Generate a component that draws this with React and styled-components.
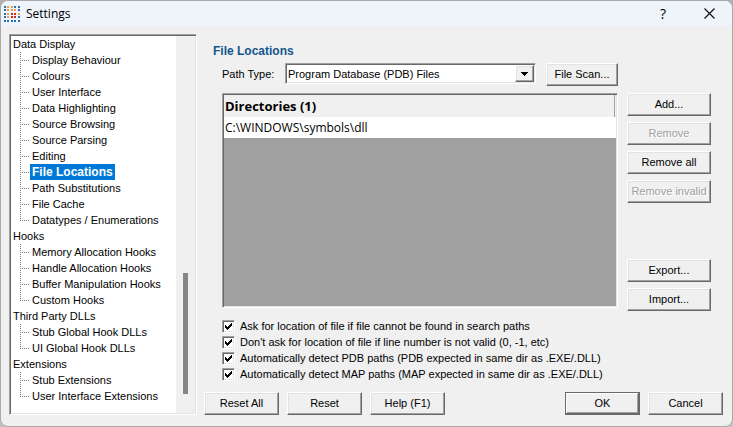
import { useState } from "react";
import styled, { createGlobalStyle, css } from "styled-components";

const TREE = [
  {
    label: "Data Display",
    items: [
      "Display Behaviour",
      "Colours",
      "User Interface",
      "Data Highlighting",
      "Source Browsing",
      "Source Parsing",
      "Editing",
      "File Locations",
      "Path Substitutions",
      "File Cache",
      "Datatypes / Enumerations",
    ],
  },
  {
    label: "Hooks",
    items: [
      "Memory Allocation Hooks",
      "Handle Allocation Hooks",
      "Buffer Manipulation Hooks",
      "Custom Hooks",
    ],
  },
  { label: "Third Party DLLs", items: ["Stub Global Hook DLLs", "UI Global Hook DLLs"] },
  { label: "Extensions", items: ["Stub Extensions", "User Interface Extensions"] },
];

const OPTIONS = [
  "Ask for location of file if file cannot be found in search paths",
  "Don't ask for location of file if line number is not valid (0, -1, etc)",
  "Automatically detect PDB paths (PDB expected in same dir as .EXE/.DLL)",
  "Automatically detect MAP paths (MAP expected in same dir as .EXE/.DLL)",
];

// b = blue, o = orange, r = red
const LOGO_ROWS = ["boobb", "booob", "borro", "borrb", "bbbbb"];
const LOGO_COLORS = { b: "#2a72b8", o: "#f0a040", r: "#cc2a22" };
const LOGO_STEPS = [0, 3, 7, 10, 14];

// top edge of the tick in each column, every column is 3px tall
const TICK = [5, 6, 7, 6, 5, 4, 3];

function Logo() {
  return (
    <svg width="16" height="16" viewBox="0 0 16 16" shapeRendering="crispEdges" aria-hidden="true">
      {LOGO_ROWS.map((row, y) =>
        row.split("").map((c, x) => (
          <rect
            key={`${x}-${y}`}
            x={LOGO_STEPS[x]}
            y={LOGO_STEPS[y]}
            width="2"
            height="2"
            fill={LOGO_COLORS[c]}
          />
        ))
      )}
    </svg>
  );
}

function Check({ label }) {
  const [checked, setChecked] = useState(true);

  return (
    <CheckLabel>
      <CheckBox>
        <input type="checkbox" checked={checked} onChange={(e) => setChecked(e.target.checked)} />
        {checked && (
          <svg width="13" height="13" viewBox="0 0 13 13" shapeRendering="crispEdges" aria-hidden="true">
            <path d={TICK.map((y, i) => `M${i + 3} ${y}h1v3h-1z`).join("")} />
          </svg>
        )}
      </CheckBox>
      {label}
    </CheckLabel>
  );
}

function App() {
  const [page, setPage] = useState("File Locations");

  return (
    <>
      <GlobalStyle />
      <Desktop>
        <Dialog>
          <TitleBar>
            <Logo />
            <h1>Settings</h1>
            <CaptionButton aria-label="Help">?</CaptionButton>
            <CaptionButton aria-label="Close">
              <svg width="11" height="11" viewBox="0 0 11 11" aria-hidden="true">
                <path d="M.5.5l10 10M10.5.5l-10 10" stroke="#111" strokeWidth="1.2" />
              </svg>
            </CaptionButton>
          </TitleBar>
          <Body>
            <TreePanel>
              <Tree>
                {TREE.map((group) => (
                  <li key={group.label}>
                    <TreeGroup>{group.label}</TreeGroup>
                    <TreeItems>
                      {group.items.map((item) => (
                        <TreeItem key={item}>
                          <TreeButton $selected={item === page} onClick={() => setPage(item)}>
                            {item}
                          </TreeButton>
                        </TreeItem>
                      ))}
                    </TreeItems>
                  </li>
                ))}
              </Tree>
              <ScrollTrack>
                <ScrollThumb />
              </ScrollTrack>
            </TreePanel>
            <Main>
              <Content>
                <Heading>File Locations</Heading>
                <PathRow>
                  <label htmlFor="pathType">Path Type:</label>
                  <Combo>
                    <select id="pathType">
                      <option>Program Database (PDB) Files</option>
                    </select>
                    <ComboArrow>
                      <svg width="7" height="4" viewBox="0 0 7 4" shapeRendering="crispEdges" aria-hidden="true">
                        <path d="M0 0h7L3.5 4z" />
                      </svg>
                    </ComboArrow>
                  </Combo>
                  <Button $width={72}>File Scan...</Button>
                </PathRow>
                <ListRow>
                  <ListBox>
                    <Directories>
                      <thead>
                        <tr>
                          <th>Directories (1)</th>
                        </tr>
                      </thead>
                      <tbody>
                        <tr>
                          <td>C:\WINDOWS\symbols\dll</td>
                        </tr>
                      </tbody>
                    </Directories>
                  </ListBox>
                  <ListActions>
                    <Button $width={84}>Add...</Button>
                    <Button $width={84} disabled>Remove</Button>
                    <Button $width={84}>Remove all</Button>
                    <Button $width={84} disabled>Remove invalid</Button>
                    <Spacer />
                    <Button $width={84}>Export...</Button>
                    <Button $width={84}>Import...</Button>
                  </ListActions>
                </ListRow>
                <Options>
                  {OPTIONS.map((label) => (
                    <Check key={label} label={label} />
                  ))}
                </Options>
              </Content>
              <Footer>
                <Button $width={75}>Reset All</Button>
                <Button $width={75}>Reset</Button>
                <Button $width={75}>Help (F1)</Button>
                <Spacer />
                <Button $width={75} $primary>OK</Button>
                <Button $width={75}>Cancel</Button>
              </Footer>
            </Main>
          </Body>
        </Dialog>
      </Desktop>
    </>
  );
}

export default App;

const GlobalStyle = createGlobalStyle`
  * {
    box-sizing: border-box;
  }
  body {
    margin: 0;
    font: 11px/16px "Liberation Sans", Arial, sans-serif;
    color: #000;
  }
  button, select, input {
    font: inherit;
    color: inherit;
    margin: 0;
  }
  svg {
    display: block;
  }
`;

const sunken = css`
  border: 1px solid;
  border-color: #a0a0a0 #fff #fff #a0a0a0;
  box-shadow: inset 1px 1px #696969, inset -1px -1px #e3e3e3;
`;

const raised = css`
  border: 1px solid;
  border-color: #fff #696969 #696969 #fff;
  box-shadow: inset -1px -1px #a0a0a0, inset 1px 1px #e3e3e3;
`;

const Desktop = styled.div`
  display: flex;
  min-height: 100vh;
  background: linear-gradient(#b4b0b2 31px, #c0b840 31px, #c0b840 46px, #c4c2c3 46px);
`;

const Dialog = styled.div`
  flex: 1;
  display: flex;
  flex-direction: column;
  background: #f0f0f0;
  border: 1px solid #aaa;
  border-radius: 8px;
  overflow: hidden;
`;

const TitleBar = styled.header`
  display: flex;
  align-items: center;
  height: 25px;
  padding-left: 3px;
  background: #eff4fa;

  h1 {
    flex: 1;
    margin: 0 0 0 6px;
    font: 12px/16px "Open Sans", "Noto Sans", sans-serif;
  }
`;

const CaptionButton = styled.button`
  display: flex;
  align-items: center;
  justify-content: center;
  width: 46px;
  height: 25px;
  padding: 0;
  border: 0;
  background: none;
  font: 14px/16px "Open Sans", "Noto Sans", sans-serif;
`;

const Body = styled.div`
  flex: 1;
  display: flex;
  gap: 7px;
  padding: 8px 9px 11px 8px;
`;

const TreePanel = styled.nav`
  ${sunken}
  display: flex;
  width: 188px;
  padding: 1px;
  background: #fff;
`;

const Tree = styled.ul`
  flex: 1;
  margin: 0;
  padding: 0;
  list-style: none;
`;

const TreeGroup = styled.div`
  padding-left: 2px;
`;

const TreeItems = styled.ul`
  margin: 0 0 0 9px;
  padding: 0;
  list-style: none;
`;

const TreeItem = styled.li`
  display: flex;
  height: 16px;
  white-space: nowrap;

  /* dotted connector, the line stops at the elbow on the last item */
  &::before {
    content: "";
    width: 10px;
    background:
      repeating-linear-gradient(#808080 0 1px, transparent 1px 2px) 0 0 / 1px 16px no-repeat,
      repeating-linear-gradient(90deg, #808080 0 1px, transparent 1px 2px) 0 8px / 9px 1px no-repeat;
  }
  &:last-child::before {
    background-size: 1px 9px, 9px 1px;
  }
`;

const TreeButton = styled.button`
  height: 16px;
  padding: 0 2px;
  border: 0;
  background: none;

  ${(p) =>
    p.$selected &&
    css`
      background: #0078d7;
      color: #fff;
      font-size: 12px;
      font-weight: 700;
    `}
`;

const ScrollTrack = styled.div`
  display: flex;
  flex-direction: column;
  justify-content: flex-end;
  width: 19px;
  padding: 0 7px 19px;
  background: #f0f0f0;
`;

const ScrollThumb = styled.div`
  height: 121px;
  background: #868686;
`;

const Main = styled.main`
  flex: 1;
  min-width: 0;
  display: flex;
  flex-direction: column;
  justify-content: space-between;
`;

const Content = styled.div`
  display: flex;
  flex-direction: column;
  padding: 9px 12px 0 18px;
`;

const Heading = styled.h2`
  margin: 0 0 4px -9px;
  font-size: 12px;
  line-height: 16px;
  color: #10568c;
`;

const PathRow = styled.div`
  display: flex;
  align-items: flex-start;
  gap: 10px;
  margin-right: 93px;

  label {
    width: 53px;
    line-height: 22px;
    white-space: nowrap;
  }
`;

const Combo = styled.div`
  ${sunken}
  flex: 1;
  display: grid;
  grid-template-columns: 1fr 19px;
  height: 21px;
  padding: 1px;
  background: #fff;

  select {
    grid-area: 1 / 1 / 2 / 3;
    appearance: none;
    height: 17px;
    padding: 0 1px;
    border: 0;
    background: none;
  }
`;

const ComboArrow = styled.span`
  ${raised}
  grid-area: 1 / 2;
  display: flex;
  align-items: center;
  justify-content: center;
  background: #f0f0f0;
  pointer-events: none;
`;

const Button = styled.button`
  ${raised}
  width: ${(p) => p.$width}px;
  height: 23px;
  padding: 0 0 2px;
  background: #f0f0f0;
  white-space: nowrap;

  ${(p) =>
    p.$primary &&
    css`
      border-color: #696969;
      box-shadow: inset -1px -1px #696969, inset 1px 1px #fff, inset -2px -2px #a0a0a0;
    `}

  &:disabled {
    color: #a0a0a0;
    text-shadow: 1px 1px #fff;
  }
`;

const ListRow = styled.div`
  display: flex;
  gap: 9px;
  margin-top: 7px;
`;

const ListBox = styled.div`
  ${sunken}
  flex: 1;
  margin-bottom: 3px;
  padding: 1px;
  background: #a0a0a0;
`;

const Directories = styled.table`
  width: 100%;
  border-spacing: 0;
  font: 12px/20px "Open Sans", "Noto Sans", sans-serif;

  th {
    height: 22px;
    padding: 0 1px;
    background: #f0f0f0;
    box-shadow: inset -1px 0 #f0f0f0, inset -2px 0 #a0a0a0;
    font-size: 13px;
    text-align: left;
  }
  td {
    height: 21px;
    padding: 0 1px;
    background: #fff;
  }
`;

const ListActions = styled.div`
  display: flex;
  flex-direction: column;
  gap: 6px;
  height: 218px;
`;

const Spacer = styled.div`
  flex: 1;
`;

const Options = styled.div`
  display: flex;
  flex-direction: column;
  margin-top: 7px;
`;

const CheckLabel = styled.label`
  display: flex;
  align-items: center;
  gap: 5px;
  height: 16px;
`;

const CheckBox = styled.span`
  display: grid;

  input {
    ${sunken}
    grid-area: 1 / 1;
    appearance: none;
    width: 13px;
    height: 13px;
    background: #fff;
  }
  svg {
    grid-area: 1 / 1;
    z-index: 1;
    pointer-events: none;
  }
`;

const Footer = styled.footer`
  display: flex;
  gap: 8px;
`;
